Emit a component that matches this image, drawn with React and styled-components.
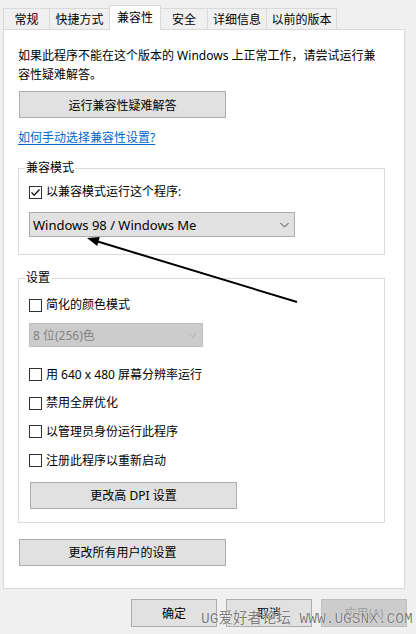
import React, { useState } from "react";
import styled, { createGlobalStyle } from "styled-components";

const GlobalStyle = createGlobalStyle`
  html, body {
    margin: 0;
    padding: 0;
    background: #f0f0f0;
  }
  * {
    box-sizing: border-box;
  }
`;

const Window = styled.div`
  position: relative;
  width: 416px;
  height: 634px;
  background: #f0f0f0;
  display: flex;
  flex-direction: column;
  font-family: "Noto Sans", "Noto Sans CJK SC", sans-serif;
  font-size: 12px;
  color: #000;
  overflow: hidden;
`;

const TabStrip = styled.div`
  height: 29px;
  display: flex;
  align-items: flex-end;
  padding-left: 3px;
`;

const Tab = styled.div`
  position: relative;
  z-index: ${(p) => (p.$active ? 2 : 1)};
  width: ${(p) => p.$w}px;
  height: ${(p) => (p.$active ? 25 : 21)}px;
  margin-bottom: ${(p) => (p.$active ? -1 : 0)}px;
  margin-left: -1px;
  background: ${(p) => (p.$active ? "#fff" : "#f0f0f0")};
  border: 1px solid #d9d9d9;
  border-bottom: none;
  display: flex;
  align-items: center;
  justify-content: center;
  padding-bottom: ${(p) => (p.$active ? 3 : 0)}px;
  &:first-child {
    margin-left: 0;
  }
`;

const Panel = styled.div`
  margin: 0 11px 0 3px;
  height: 560px;
  background: #fff;
  border: 1px solid #d9d9d9;
  padding: 16px 14px 0 14px;
  display: flex;
  flex-direction: column;
  align-items: flex-start;
`;

const Intro = styled.p`
  margin: 0;
  line-height: 19px;
  white-space: nowrap;
`;

const Button = styled.button`
  width: ${(p) => p.$w || 207}px;
  height: ${(p) => p.$h || 27}px;
  margin-top: ${(p) => p.$mt || 0}px;
  margin-left: ${(p) => p.$ml || 0}px;
  background: ${(p) => (p.disabled ? "#cccccc" : "#e1e1e1")};
  border: 1px solid ${(p) => (p.disabled ? "#bfbfbf" : "#adadad")};
  color: ${(p) => (p.disabled ? "#a0a0a0" : "#000")};
  font-family: inherit;
  font-size: 12px;
  padding: 0;
  flex: none;
`;

const Link = styled.a`
  margin-top: 12px;
  line-height: 16px;
  color: #0066cc;
  text-decoration: underline;
  text-underline-offset: 2px;
`;

const Group = styled.div`
  position: relative;
  width: 367px;
  margin-top: ${(p) => p.$mt}px;
  border: 1px solid #dcdcdc;
  padding: ${(p) => p.$pad};
  display: flex;
  flex-direction: column;
  align-items: flex-start;
`;

const GroupTitle = styled.span`
  position: absolute;
  top: -9px;
  left: 6px;
  padding: 0 1px;
  background: #fff;
  line-height: 16px;
`;

const CheckRow = styled.label`
  display: flex;
  align-items: center;
  gap: 4px;
  height: 16px;
  margin-top: ${(p) => p.$mt || 0}px;
  line-height: 16px;
`;

const Box = styled.span`
  width: 13px;
  height: 13px;
  border: 1px solid #333;
  background: #fff;
  display: flex;
  align-items: center;
  justify-content: center;
  flex: none;
`;

const Select = styled.div`
  width: ${(p) => p.$w}px;
  height: ${(p) => p.$h}px;
  margin-top: ${(p) => p.$mt}px;
  background: ${(p) => (p.$disabled ? "#cccccc" : "#e1e1e1")};
  border: 1px solid ${(p) => (p.$disabled ? "#bfbfbf" : "#adadad")};
  color: ${(p) => (p.$disabled ? "#838383" : "#000")};
  display: flex;
  align-items: center;
  justify-content: space-between;
  padding: 0 5px 0 3px;
  font-size: ${(p) => (p.$disabled ? 12 : 13)}px;
`;

const Footer = styled.div`
  display: flex;
  justify-content: flex-end;
  gap: 9px;
  padding: 10px 9px 0 0;
`;

const Overlay = styled.svg`
  position: absolute;
  left: 0;
  top: 0;
  pointer-events: none;
`;

const Watermark = styled.div`
  position: absolute;
  left: 201px;
  top: 610px;
  font-family: "Liberation Mono", "Noto Sans CJK SC", monospace;
  font-size: 14.5px;
  line-height: 18px;
  color: #7c7c7c;
  white-space: nowrap;
  text-shadow: 0 0 1px #fff, 0 0 1px #fff;
  pointer-events: none;
`;

const Check = ({ checked, children, mt, onToggle }) => (
  <CheckRow $mt={mt} onClick={onToggle}>
    <Box>
      {checked && (
        <svg width="11" height="11" viewBox="0 0 11 11">
          <path d="M1.5 5.5 L4.2 8.2 L9.5 2.5" fill="none" stroke="#000" strokeWidth="1.2" />
        </svg>
      )}
    </Box>
    <span>{children}</span>
  </CheckRow>
);

const Chevron = ({ color }) => (
  <svg width="9" height="6" viewBox="0 0 9 6">
    <path d="M0.5 1 L4.5 5 L8.5 1" fill="none" stroke={color} strokeWidth="1" />
  </svg>
);

const tabs = [
  { label: "常规", w: 47 },
  { label: "快捷方式", w: 61 },
  { label: "兼容性", w: 52 },
  { label: "安全", w: 48 },
  { label: "详细信息", w: 60 },
  { label: "以前的版本", w: 71 },
];

export default function App() {
  const [compat, setCompat] = useState(true);

  return (
    <Window>
      <GlobalStyle />
      <TabStrip>
        {tabs.map((t) => (
          <Tab key={t.label} $w={t.w} $active={t.label === "兼容性"}>
            {t.label}
          </Tab>
        ))}
      </TabStrip>
      <Panel>
        <Intro>
          如果此程序不能在这个版本的 Windows 上正常工作，请尝试运行兼
          <br />
          容性疑难解答。
        </Intro>
        <Button $mt={7} $ml={1}>运行兼容性疑难解答</Button>
        <Link>如何手动选择兼容性设置?</Link>

        <Group $mt={22} $pad="15px 0 17px 10px">
          <GroupTitle>兼容模式</GroupTitle>
          <Check checked={compat} onToggle={() => setCompat(!compat)}>
            以兼容模式运行这个程序:
          </Check>
          <Select $w={266} $h={25} $mt={12}>
            <span>Windows 98 / Windows Me</span>
            <Chevron color="#444" />
          </Select>
        </Group>

        <Group $mt={23} $pad="18px 0 13px 10px">
          <GroupTitle>设置</GroupTitle>
          <Check>简化的颜色模式</Check>
          <Select $w={174} $h={24} $mt={10} $disabled>
            <span>8 位(256)色</span>
            <Chevron color="#b0b0b0" />
          </Select>
          <Check mt={19.5}>用 640 x 480 屏幕分辨率运行</Check>
          <Check mt={12.7}>禁用全屏优化</Check>
          <Check mt={12.7}>以管理员身份运行此程序</Check>
          <Check mt={12.7}>注册此程序以重新启动</Check>
          <Button $mt={13} $ml={1}>更改高 DPI 设置</Button>
        </Group>

        <Button $mt={16} $ml={1}>更改所有用户的设置</Button>
      </Panel>
      <Footer>
        <Button $w={86} $h={28}>确定</Button>
        <Button $w={86} $h={28}>取消</Button>
        <Button $w={86} $h={28} disabled>应用(A)</Button>
      </Footer>

      <Overlay width="416" height="634" viewBox="0 0 416 634">
        <line x1="297" y1="302" x2="96" y2="241" stroke="#000" strokeWidth="2" />
        <polygon points="87,238 99.8,236.9 97.2,246.1" fill="#000" />
      </Overlay>
      <Watermark>UG爱好者论坛 WWW.UGSNX.COM</Watermark>
    </Window>
  );
}
